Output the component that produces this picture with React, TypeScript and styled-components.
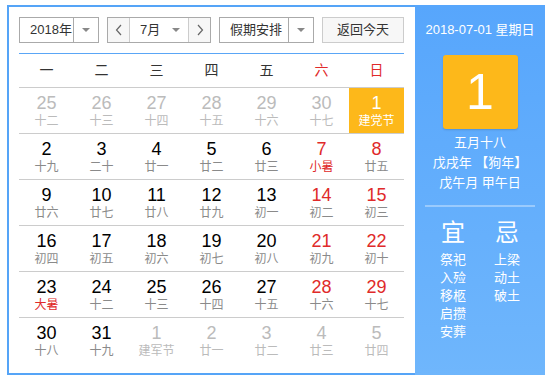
import React from 'react';
import styled, { createGlobalStyle } from 'styled-components';

const GlobalStyle = createGlobalStyle`
  body {
    margin: 0;
    background: #ffffff;
    font-family: "Liberation Sans", "Noto Sans CJK SC", sans-serif;
  }
`;

type Day = {
  num: number;
  lunar: string;
  out?: boolean;
  red?: boolean;
  lunarRed?: boolean;
  today?: boolean;
};

const weekdays = ['一', '二', '三', '四', '五', '六', '日'];

const rows: Day[][] = [
  [
    { num: 25, lunar: '十二', out: true },
    { num: 26, lunar: '十三', out: true },
    { num: 27, lunar: '十四', out: true },
    { num: 28, lunar: '十五', out: true },
    { num: 29, lunar: '十六', out: true },
    { num: 30, lunar: '十七', out: true },
    { num: 1, lunar: '建党节', today: true },
  ],
  [
    { num: 2, lunar: '十九' },
    { num: 3, lunar: '二十' },
    { num: 4, lunar: '廿一' },
    { num: 5, lunar: '廿二' },
    { num: 6, lunar: '廿三' },
    { num: 7, lunar: '小暑', red: true, lunarRed: true },
    { num: 8, lunar: '廿五', red: true },
  ],
  [
    { num: 9, lunar: '廿六' },
    { num: 10, lunar: '廿七' },
    { num: 11, lunar: '廿八' },
    { num: 12, lunar: '廿九' },
    { num: 13, lunar: '初一' },
    { num: 14, lunar: '初二', red: true },
    { num: 15, lunar: '初三', red: true },
  ],
  [
    { num: 16, lunar: '初四' },
    { num: 17, lunar: '初五' },
    { num: 18, lunar: '初六' },
    { num: 19, lunar: '初七' },
    { num: 20, lunar: '初八' },
    { num: 21, lunar: '初九', red: true },
    { num: 22, lunar: '初十', red: true },
  ],
  [
    { num: 23, lunar: '大暑', lunarRed: true },
    { num: 24, lunar: '十二' },
    { num: 25, lunar: '十三' },
    { num: 26, lunar: '十四' },
    { num: 27, lunar: '十五' },
    { num: 28, lunar: '十六', red: true },
    { num: 29, lunar: '十七', red: true },
  ],
  [
    { num: 30, lunar: '十八' },
    { num: 31, lunar: '十九' },
    { num: 1, lunar: '建军节', out: true },
    { num: 2, lunar: '廿一', out: true },
    { num: 3, lunar: '廿二', out: true },
    { num: 4, lunar: '廿三', out: true },
    { num: 5, lunar: '廿四', out: true },
  ],
];

const yi = ['祭祀', '入殓', '移柩', '启攒', '安葬'];
const ji = ['上梁', '动土', '破土'];

const Chevron = ({ dir }: { dir: 'left' | 'right' }) => (
  <svg width="8" height="12" viewBox="0 0 8 12">
    <polyline
      points={dir === 'left' ? '6,1 1.5,6 6,11' : '2,1 6.5,6 2,11'}
      fill="none"
      stroke="#666"
      strokeWidth="1.2"
    />
  </svg>
);

const App = () => {
  return (
    <>
      <GlobalStyle />
      <Wrapper>
        <LeftPanel>
          <Toolbar>
            <SelectBox width={80}>
              <SelectText>2018年</SelectText>
              <SelectArrow />
            </SelectBox>
            <MonthBox>
              <NavButton>
                <Chevron dir="left" />
              </NavButton>
              <MonthSelect>
                <SelectText>7月</SelectText>
                <Triangle />
              </MonthSelect>
              <NavButton right>
                <Chevron dir="right" />
              </NavButton>
            </MonthBox>
            <SelectBox width={95}>
              <SelectText>假期安排</SelectText>
              <SelectArrow />
            </SelectBox>
            <TodayButton>返回今天</TodayButton>
          </Toolbar>

          <WeekHeader>
            {weekdays.map((w, i) => (
              <WeekCell key={w} red={i >= 5}>
                {w}
              </WeekCell>
            ))}
          </WeekHeader>

          <Grid>
            {rows.map((row, ri) => (
              <Row key={ri} last={ri === rows.length - 1}>
                {row.map((d, di) => (
                  <DayCell key={di} today={d.today}>
                    <DayNum
                      tone={d.today ? 'today' : d.out ? 'out' : d.red ? 'red' : 'normal'}
                    >
                      {d.num}
                    </DayNum>
                    <DayLunar
                      tone={d.today ? 'today' : d.out ? 'out' : d.lunarRed ? 'red' : 'normal'}
                    >
                      {d.lunar}
                    </DayLunar>
                  </DayCell>
                ))}
              </Row>
            ))}
          </Grid>
        </LeftPanel>

        <RightPanel>
          <DateLine>2018-07-01 星期日</DateLine>
          <BigDay>1</BigDay>
          <LunarInfo>
            <div>五月十八</div>
            <div>戊戌年 【狗年】</div>
            <div>戊午月 甲午日</div>
          </LunarInfo>
          <Divider />
          <Almanac>
            <AlmanacCol>
              <AlmanacTitle>宜</AlmanacTitle>
              {yi.map((t) => (
                <AlmanacItem key={t}>{t}</AlmanacItem>
              ))}
            </AlmanacCol>
            <AlmanacCol>
              <AlmanacTitle>忌</AlmanacTitle>
              {ji.map((t) => (
                <AlmanacItem key={t}>{t}</AlmanacItem>
              ))}
            </AlmanacCol>
          </Almanac>
        </RightPanel>
      </Wrapper>
    </>
  );
};

const Wrapper = styled.div`
  display: flex;
  width: 538px;
  height: 370px;
  margin: 5px 0 0 7px;
`;

const LeftPanel = styled.div`
  box-sizing: border-box;
  width: 408px;
  height: 370px;
  border: 2px solid #55a4f7;
  border-right: none;
  padding: 10px 11px 0 10px;
  background: #ffffff;
`;

const Toolbar = styled.div`
  display: flex;
  justify-content: space-between;
  height: 26px;
  margin-bottom: 10px;
`;

const SelectBox = styled.div<{ width: number }>`
  box-sizing: border-box;
  display: flex;
  width: ${(p) => p.width}px;
  height: 26px;
  border: 1px solid #aaaaaa;
  background: #ffffff;
`;

const SelectText = styled.span`
  flex: 1;
  padding-left: 10px;
  font-size: 13px;
  line-height: 24px;
  color: #333333;
  white-space: nowrap;
`;

const SelectArrow = styled.div`
  width: 24px;
  border-left: 1px solid #aaaaaa;
  display: flex;
  align-items: center;
  justify-content: center;

  &::after {
    content: '';
    border-left: 4px solid transparent;
    border-right: 4px solid transparent;
    border-top: 4px solid #888888;
  }
`;

const Triangle = styled.span`
  width: 0;
  height: 0;
  margin-right: 8px;
  border-left: 4px solid transparent;
  border-right: 4px solid transparent;
  border-top: 4px solid #888888;
`;

const MonthBox = styled.div`
  box-sizing: border-box;
  display: flex;
  width: 104px;
  height: 26px;
  border: 1px solid #aaaaaa;
`;

const NavButton = styled.div<{ right?: boolean }>`
  width: 21px;
  display: flex;
  align-items: center;
  justify-content: center;
  background: #f7f7f7;
  ${(p) => (p.right ? 'border-left: 1px solid #cccccc;' : 'border-right: 1px solid #cccccc;')}
`;

const MonthSelect = styled.div`
  flex: 1;
  display: flex;
  align-items: center;
`;

const TodayButton = styled.div`
  box-sizing: border-box;
  width: 82px;
  height: 26px;
  border: 1px solid #cccccc;
  background: #f7f7f7;
  font-size: 13px;
  line-height: 24px;
  text-align: center;
  color: #333333;
`;

const WeekHeader = styled.div`
  display: grid;
  grid-template-columns: repeat(7, 55px);
  height: 33px;
  border-top: 1px solid #5aa6f6;
  border-bottom: 1px solid #cccccc;
`;

const WeekCell = styled.div<{ red?: boolean }>`
  font-size: 14px;
  line-height: 33px;
  text-align: center;
  color: ${(p) => (p.red ? '#e02a2a' : '#333333')};
`;

const Grid = styled.div`
  display: flex;
  flex-direction: column;
`;

const Row = styled.div<{ last?: boolean }>`
  display: grid;
  grid-template-columns: repeat(7, 55px);
  height: 45px;
  border-bottom: ${(p) => (p.last ? 'none' : '1px solid #cccccc')};
`;

const DayCell = styled.div<{ today?: boolean }>`
  display: flex;
  flex-direction: column;
  align-items: center;
  padding-top: 5px;
  box-sizing: border-box;
  background: ${(p) => (p.today ? '#fdb81a' : 'transparent')};
`;

type Tone = 'normal' | 'out' | 'red' | 'today';

const numColor: Record<Tone, string> = {
  normal: '#000000',
  out: '#bbbbbb',
  red: '#e02a2a',
  today: '#ffffff',
};

const lunarColor: Record<Tone, string> = {
  normal: '#8a8a8a',
  out: '#bbbbbb',
  red: '#e02a2a',
  today: '#ffffff',
};

const DayNum = styled.div<{ tone: Tone }>`
  font-size: 18px;
  line-height: 20px;
  color: ${(p) => numColor[p.tone]};
`;

const DayLunar = styled.div<{ tone: Tone }>`
  font-size: 12px;
  line-height: 16px;
  color: ${(p) => lunarColor[p.tone]};
`;

const RightPanel = styled.div`
  width: 130px;
  height: 370px;
  display: flex;
  flex-direction: column;
  align-items: center;
  padding-top: 15px;
  box-sizing: border-box;
  background: linear-gradient(180deg, #57a6fc 0%, #6fb6fc 100%);
  color: #ffffff;
`;

const DateLine = styled.div`
  font-size: 13px;
  line-height: 20px;
  white-space: nowrap;
`;

const BigDay = styled.div`
  width: 75px;
  height: 74px;
  margin-top: 15px;
  border-radius: 3px;
  background: #fdb81a;
  box-shadow: 0 1px 2px rgba(0, 0, 0, 0.15);
  font-size: 50px;
  line-height: 74px;
  text-align: center;
`;

const LunarInfo = styled.div`
  margin-top: 4px;
  font-size: 13px;
  line-height: 20px;
  text-align: center;
  white-space: nowrap;
`;

const Divider = styled.div`
  width: 110px;
  height: 2px;
  margin-top: 12px;
  background: rgba(255, 255, 255, 0.35);
`;

const Almanac = styled.div`
  display: flex;
  gap: 14px;
  margin-top: 12px;
`;

const AlmanacCol = styled.div`
  width: 40px;
  display: flex;
  flex-direction: column;
  align-items: center;
`;

const AlmanacTitle = styled.div`
  font-size: 24px;
  line-height: 28px;
  margin-bottom: 4px;
`;

const AlmanacItem = styled.div`
  font-size: 13px;
  line-height: 18px;
`;

export default App;
